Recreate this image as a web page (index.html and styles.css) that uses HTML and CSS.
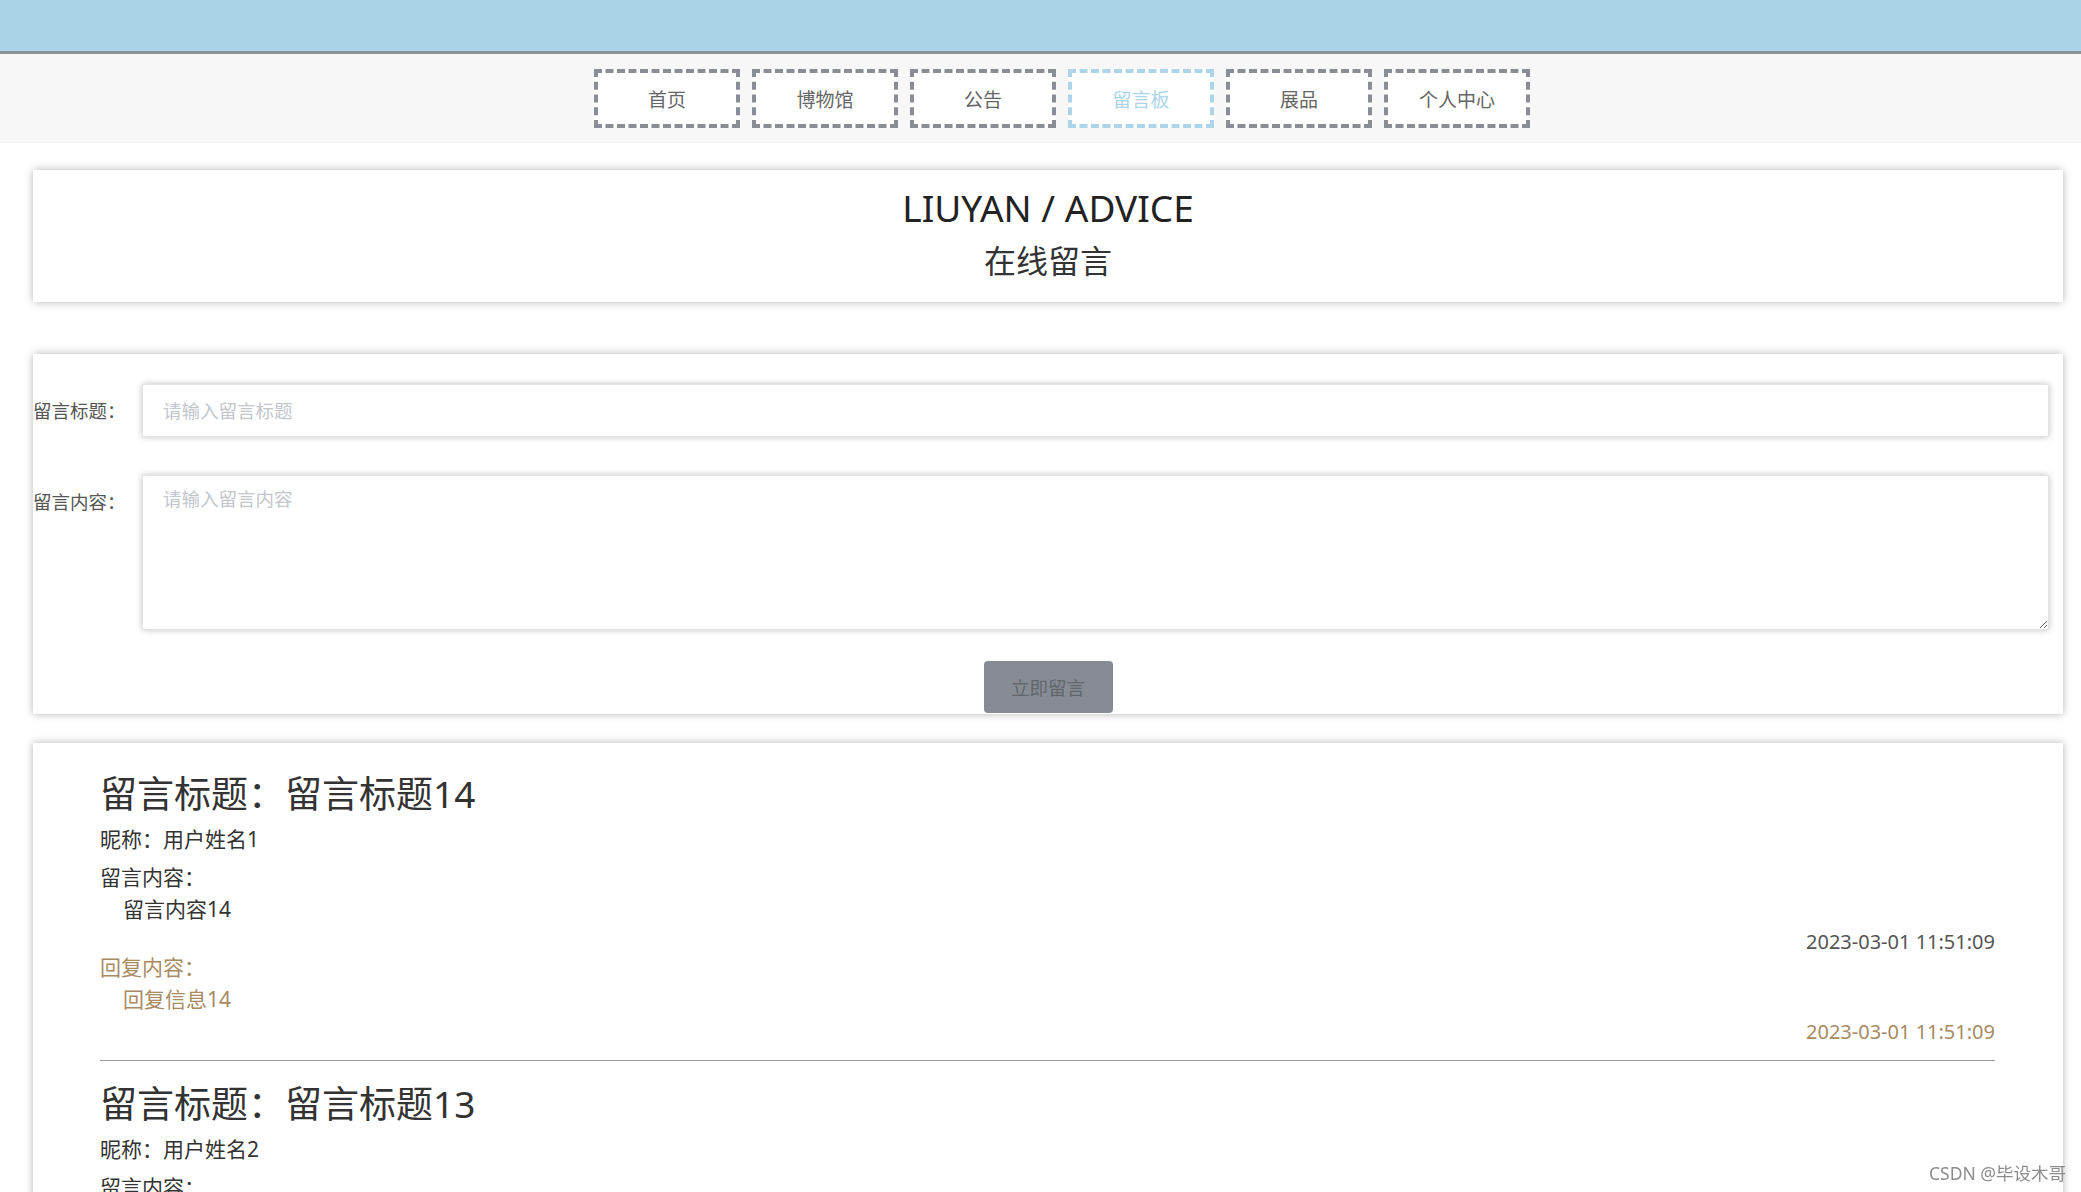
FILE: index.html
```html
<!DOCTYPE html>
<html lang="zh-CN">
<head>
<meta charset="utf-8">
<title>在线留言</title>
<link rel="stylesheet" href="styles.css">
</head>
<body>
<div class="topbar"></div>
<nav class="nav">
  <a class="nav-item" href="#">首页</a>
  <a class="nav-item" href="#">博物馆</a>
  <a class="nav-item" href="#">公告</a>
  <a class="nav-item active" href="#">留言板</a>
  <a class="nav-item" href="#">展品</a>
  <a class="nav-item" href="#">个人中心</a>
</nav>
<main class="container">
  <section class="card head-card">
    <h1 class="en-title">LIUYAN / ADVICE</h1>
    <h2 class="cn-title">在线留言</h2>
  </section>

  <section class="card form-card">
    <div class="form-row">
      <label class="form-label">留言标题：</label>
      <input class="form-input" type="text" placeholder="请输入留言标题">
    </div>
    <div class="form-row">
      <label class="form-label">留言内容：</label>
      <textarea class="form-textarea" placeholder="请输入留言内容"></textarea>
    </div>
    <div class="btn-row">
      <button class="submit-btn" type="button">立即留言</button>
    </div>
  </section>

  <section class="card list-card">
    <div class="msg-item">
      <h3 class="msg-title">留言标题：留言标题14</h3>
      <div class="msg-nick">昵称：用户姓名1</div>
      <div class="msg-label">留言内容：</div>
      <div class="msg-text">留言内容14</div>
      <div class="msg-time">2023-03-01 11:51:09</div>
      <div class="msg-label reply reply-label">回复内容：</div>
      <div class="msg-text reply">回复信息14</div>
      <div class="msg-time reply">2023-03-01 11:51:09</div>
    </div>
    <div class="msg-item">
      <h3 class="msg-title">留言标题：留言标题13</h3>
      <div class="msg-nick">昵称：用户姓名2</div>
      <div class="msg-label">留言内容：</div>
      <div class="msg-text">留言内容13</div>
      <div class="msg-time">2023-03-01 11:51:09</div>
      <div class="msg-label reply reply-label">回复内容：</div>
      <div class="msg-text reply">回复信息13</div>
      <div class="msg-time reply">2023-03-01 11:51:09</div>
    </div>
  </section>
</main>
<div class="watermark">CSDN @毕设木哥</div>
</body>
</html>
```
FILE: styles.css
```css
* { box-sizing: border-box; }
html, body { margin: 0; padding: 0; overflow: hidden; }
body {
  font-family: "Noto Sans", "Noto Sans CJK SC", sans-serif;
  background: #fff;
  color: #333;
}
.topbar {
  height: 54px;
  background: #abd3e8;
  border-bottom: 3px solid #8c9097;
}
.nav {
  height: 89px;
  background: #f7f7f7;
  display: flex;
  justify-content: center;
  align-items: flex-start;
  gap: 12px;
  padding: 15px 0 0 43px;
}
.nav-item {
  width: 146px;
  height: 59px;
  border: 4px dashed #8a8d93;
  background: #fff;
  display: flex;
  align-items: center;
  justify-content: center;
  font-size: 19px;
  color: #666;
  text-decoration: none;
}
.nav-item.active {
  border-color: #acd4ea;
  color: #acd4ea;
}
.container {
  padding: 27px 18px 0 33px;
}
.card {
  background: #fff;
  box-shadow: 0 0 8px rgba(0, 0, 0, 0.3);
}
.head-card {
  height: 132px;
  padding-top: 13px;
  text-align: center;
}
.en-title {
  margin: 0;
  font-size: 37px;
  line-height: 50px;
  font-weight: 400;
  color: #222;
}
.cn-title {
  margin: 3px 0 0;
  font-size: 32px;
  line-height: 50px;
  font-weight: 400;
  color: #333;
}
.form-card {
  margin-top: 52px;
  padding: 30px 14px 1px 0;
}
.form-row {
  display: flex;
  align-items: flex-start;
}
.form-row + .form-row {
  margin-top: 38px;
}
.form-label {
  width: 109px;
  flex: none;
  font-size: 18.5px;
  line-height: 53px;
  color: #555;
}
.form-input,
.form-textarea {
  flex: 1;
  border: 1px solid #e4e4e4;
  border-radius: 2px;
  box-shadow: 0 0 6px rgba(0, 0, 0, 0.25);
  padding: 0 20px;
  font-size: 18.5px;
  font-family: inherit;
  color: #333;
  background: #fff;
  outline: none;
}
.form-input { height: 53px; }
.form-textarea {
  height: 155px;
  padding: 11px 20px;
  line-height: 24px;
}
.form-input::placeholder,
.form-textarea::placeholder { color: #c3c6cc; }
.btn-row {
  display: flex;
  justify-content: center;
  margin-top: 31px;
  margin-right: -14px;
}
.submit-btn {
  width: 129px;
  height: 52px;
  background: #878c94;
  color: #62666c;
  border: none;
  border-radius: 4px;
  font-size: 18.5px;
  font-family: inherit;
}
.list-card {
  margin-top: 29px;
  padding: 26px 68px 40px 67px;
}
.msg-title {
  margin: 0;
  font-size: 37px;
  line-height: 50px;
  font-weight: 400;
  color: #333;
}
.msg-nick {
  margin-top: 4px;
  font-size: 21px;
  line-height: 32px;
  color: #333;
}
.msg-label {
  margin-top: 6px;
  font-size: 21px;
  line-height: 32px;
  color: #333;
}
.msg-text {
  padding-left: 23px;
  font-size: 21px;
  line-height: 32px;
  color: #333;
}
.msg-time {
  margin-top: 4px;
  text-align: right;
  font-size: 20px;
  line-height: 26px;
  color: #555;
}
.reply { color: #a88a64; }
.reply-label { margin-top: -4px; }
.msg-item + .msg-item {
  margin-top: 15px;
  border-top: 1px solid #9a9a9a;
  padding-top: 18px;
}
.watermark {
  position: fixed;
  right: 15px;
  bottom: 7px;
  font-size: 17.5px;
  color: rgba(120, 120, 120, 0.85);
}
```
